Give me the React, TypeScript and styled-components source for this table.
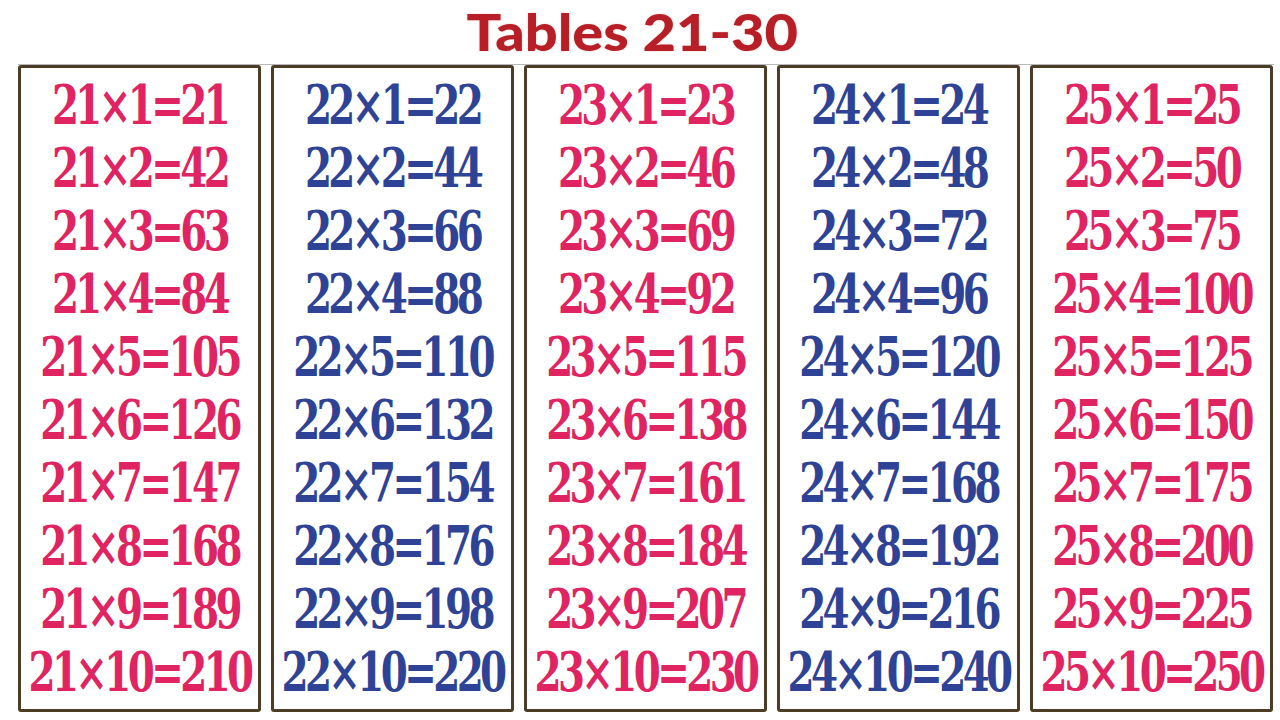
import styled, { createGlobalStyle } from 'styled-components'

const GlobalStyle = createGlobalStyle`
  html, body {
    margin: 0;
    padding: 0;
    background: #ffffff;
  }
  body {
    width: 1280px;
    height: 720px;
    overflow: hidden;
  }
`

const Page = styled.div`
  width: 1280px;
  height: 720px;
  background: #fff;
  display: flex;
  flex-direction: column;
`

const Header = styled.div`
  height: 64px;
  display: flex;
  align-items: flex-start;
  justify-content: center;
  padding-right: 16px;
  box-sizing: border-box;
`

const Title = styled.h1`
  margin: 0;
  font-family: 'Lato', 'Open Sans', sans-serif;
  font-weight: 900;
  font-size: 52px;
  line-height: 62.4px;
  color: #b81e26;
  letter-spacing: 0;
  transform: scaleX(1.11);
  text-shadow: 0 0 2px #f3c9c9;
`

const Board = styled.div`
  margin-left: 18px;
  width: 1256px;
  border-top: 1px solid #b9b9b9;
  display: flex;
  gap: 10px;
`

const Column = styled.div`
  width: 243px;
  height: 647px;
  box-sizing: border-box;
  border: 3px solid #4d3d26;
  border-radius: 3px;
  padding-top: 5px;
  display: flex;
  flex-direction: column;
  background: #fff;
`

const Row = styled.div<{ $color: string }>`
  height: 63px;
  display: flex;
  align-items: center;
  justify-content: center;
  font-family: 'DejaVu Serif', 'Liberation Serif', serif;
  font-weight: 700;
  font-size: 54px;
  color: ${p => p.$color};
  white-space: nowrap;
  transform: scaleX(0.72);
  letter-spacing: -5px;
`

const PINK = '#df2461'
const BLUE = '#2f4396'

const tables = [21, 22, 23, 24, 25]

export default function App() {
  return (
    <Page>
      <GlobalStyle />
      <Header>
        <Title>Tables 21-30</Title>
      </Header>
      <Board>
        {tables.map((n, i) => (
          <Column key={n}>
            {Array.from({ length: 10 }, (_, k) => k + 1).map(m => (
              <Row key={m} $color={i % 2 === 0 ? PINK : BLUE}>
                {n}×{m}={n * m}
              </Row>
            ))}
          </Column>
        ))}
      </Board>
    </Page>
  )
}
